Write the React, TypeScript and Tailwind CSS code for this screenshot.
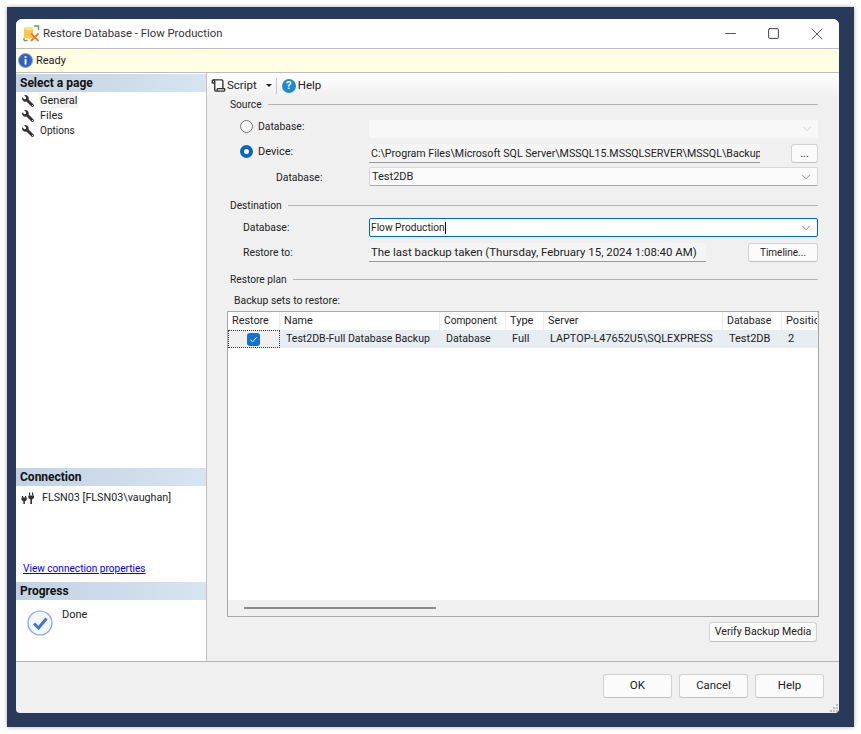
import React from "react";
import { ChevronDown, Minus, Square, X, Scroll } from "lucide-react";
import { FaWrench } from "react-icons/fa";

function SideHeader({ children }: { children: React.ReactNode }) {
  return (
    <div className="h-[18px] flex items-center pl-1 font-bold text-[12px] text-[#111] bg-gradient-to-r from-[#c3d2e2] to-[#d7e4f1]">
      {children}
    </div>
  );
}

function PageItem({ label, active, className }: { label: string; active?: boolean; className?: string }) {
  return (
    <div className="h-[15px] flex items-center pl-[6px]">
      <FaWrench className="text-[#333] w-[12px] h-[12px] -scale-x-100" />
      <span className={"ml-[5px] px-[1px] leading-[15px] " + (active ? "bg-[#f3f3f3] " : "") + (className || "")}>{label}</span>
    </div>
  );
}

function Section({ label, className }: { label: string; className?: string }) {
  return (
    <div className={"flex items-center h-[14px] " + (className || "")}>
      <span className="text-[10.2px] pt-[2px]">{label}</span>
      <div className="flex-1 h-[1px] bg-[#b4b4b4] ml-[6px]" />
    </div>
  );
}

function Btn({ children, className }: { children: React.ReactNode; className?: string }) {
  return (
    <div className={"flex items-center justify-center rounded-[3px] bg-[#fbfbfb] border border-[#d2d2d2] border-b-[#c2c2c2] " + (className || "")}>
      {children}
    </div>
  );
}

function Combo({ children, className }: { children?: React.ReactNode; className?: string }) {
  return (
    <div className={"flex items-center justify-between pl-[1px] pr-[4px] rounded-[2px] " + (className || "")}>
      <span className="leading-[15px] whitespace-nowrap">{children}</span>
      <ChevronDown className="w-[14px] h-[14px] text-[#555] shrink-0" strokeWidth={1.25} />
    </div>
  );
}

const cols = [
  { h: "Restore", w: "w-[52px]", c: "", hs: "text-[10.8px]", cs: "" },
  { h: "Name", w: "w-[160px]", c: "Test2DB-Full Database Backup", hs: "text-[10.8px]", cs: "text-[10.55px]" },
  { h: "Component", w: "w-[66px]", c: "Database", hs: "text-[10.2px]", cs: "text-[10.6px]" },
  { h: "Type", w: "w-[38px]", c: "Full", hs: "text-[11px]", cs: "text-[11px]" },
  { h: "Server", w: "w-[179px]", c: "LAPTOP-L47652U5\\SQLEXPRESS", hs: "text-[10.8px]", cs: "text-[10.85px]" },
  { h: "Database", w: "w-[59px]", c: "Test2DB", hs: "text-[10.5px]", cs: "text-[11px]" },
  { h: "Position", w: "w-[36px]", c: "2", hs: "text-[11px]", cs: "text-[11px]" },
];

function TitleIcon() {
  return (
    <svg width="17" height="17" viewBox="0 0 17 17">
      <path d="M1 3.5 C1 1.5 10 1.5 10 3.5 V12 C10 14 1 14 1 12 Z" fill="#f7c64a" />
      <ellipse cx="5.5" cy="3.5" rx="4.5" ry="1.8" fill="#fbe08c" />
      <path d="M11 1 H15.5 V5" fill="none" stroke="#5aa55a" strokeWidth="1.4" />
      <path d="M1 15.5 H4.5 M1 15.5 V13" fill="none" stroke="#5aa55a" strokeWidth="1.4" />
      <path d="M8 8.5 L15.5 16 M15.5 8.5 L8 16" stroke="#ea7a22" strokeWidth="1.8" />
    </svg>
  );
}

function InfoIcon() {
  return (
    <svg width="15" height="15" viewBox="0 0 15 15">
      <circle cx="7.5" cy="7.5" r="7" fill="#2f62c0" stroke="#8f9fb8" />
      <rect x="6.6" y="6.2" width="1.9" height="5.4" fill="#fff" />
      <rect x="6.6" y="3.2" width="1.9" height="1.9" fill="#fff" />
    </svg>
  );
}

function PlugIcon() {
  return (
    <svg width="14" height="14" viewBox="0 0 14 14" fill="#333">
      <rect x="1" y="5" width="1.2" height="2.5" />
      <rect x="4" y="5" width="1.2" height="2.5" />
      <path d="M0.5 6.5 H5.7 V9 L3.9 10.5 V13 H2.4 V10.5 L0.5 9 Z" />
      <rect x="8" y="1.5" width="1.2" height="3" />
      <rect x="11" y="1.5" width="1.2" height="3" />
      <path d="M7.3 4.5 H13 V7 L11 8.5 V13 H9.3 V8.5 L7.3 7 Z" />
    </svg>
  );
}

function DoneIcon() {
  return (
    <svg width="26" height="26" viewBox="0 0 26 26">
      <circle cx="13" cy="13" r="12" fill="#f2f5fb" stroke="#8aa4cc" strokeWidth="1.2" />
      <path d="M7 13.5 L11.5 18 L19.5 8.5" fill="none" stroke="#3f74d8" strokeWidth="3" />
    </svg>
  );
}

function Grip() {
  const dots = [[8, 0], [5, 3], [8, 3], [2, 6], [5, 6], [8, 6]];
  return (
    <svg width="10" height="8" viewBox="0 0 10 8" fill="#bdbdbd">
      {dots.map(([x, y], i) => <rect key={i} x={x} y={y} width="2" height="2" />)}
    </svg>
  );
}

export default function App() {
  return (
    <div className="w-[861px] h-[734px] bg-white p-[7px] text-[11px] text-[#222] font-['Roboto','Noto_Sans',sans-serif] leading-none overflow-hidden">
      <div className="w-[847px] h-[720px] bg-[#28395a] pt-[12px] pl-[9px] shadow-[0_0_4px_rgba(0,0,0,0.35)]">
        <div className="w-[823px] h-[694px] flex flex-col bg-[#f0f0f0] rounded-t-[6px] rounded-b-[4px] overflow-hidden">
          {/* Title bar */}
          <div className="h-[30px] shrink-0 bg-white flex items-center border-b border-[#bdbdbd]">
            <div className="ml-[7px]"><TitleIcon /></div>
            <span className="ml-[3px] text-[#333] text-[11.3px]">Restore Database - Flow Production</span>
            <div className="ml-auto flex items-center">
              <Minus className="w-[17px] h-[17px] mr-[28px] text-[#222]" strokeWidth={1.1} />
              <Square className="w-[13px] h-[13px] mr-[27px] text-[#222]" strokeWidth={1.6} />
              <X className="w-[20px] h-[20px] mr-[12px] text-[#222]" strokeWidth={0.9} />
            </div>
          </div>
          {/* Status */}
          <div className="h-[24px] shrink-0 bg-[#ffffe4] flex items-center pl-[2px] border-b border-[#bdbdbd]">
            <InfoIcon />
            <span className="ml-[3px]">Ready</span>
          </div>
          {/* Body */}
          <div className="h-[589px] shrink-0 flex border-b border-[#b4b4b4]">
            {/* Left pane */}
            <div className="w-[191px] shrink-0 bg-white flex flex-col pt-[1px] border-r border-[#c0c0c0]">
              <SideHeader>Select a page</SideHeader>
              <div className="pt-[1px]">
                <PageItem label="General" active />
                <PageItem label="Files" />
                <PageItem label="Options" className="text-[10px]" />
              </div>
              <div className="flex-1" />
              <SideHeader>Connection</SideHeader>
              <div className="h-[64px] flex items-start pl-[5px] pt-[5px]">
                <PlugIcon />
                <span className="ml-[7px] leading-[14px] text-[10.75px]">FLSN03 [FLSN03\vaughan]</span>
              </div>
              <div className="h-[32px] pl-[7px] pt-[12px]">
                <span className="text-[#0000ee] underline leading-[14px] text-[10.1px]">View connection properties</span>
              </div>
              <SideHeader>Progress</SideHeader>
              <div className="h-[61px] flex items-start pl-[11px] pt-[10px]">
                <DoneIcon />
                <span className="ml-[9px] -mt-[2px] leading-[14px]">Done</span>
              </div>
            </div>
            {/* Right pane */}
            <div className="w-[632px] flex flex-col">
              <div className="h-[24px] shrink-0 bg-gradient-to-b from-white to-[#f0f0f0] flex items-center pl-[4px] pt-[1px]">
                <Scroll className="w-[15px] h-[15px] text-[#333]" strokeWidth={2.2} />
                <span className="ml-[1px] text-[11.5px]">Script</span>
                <div className="ml-[9px] w-0 h-0 border-x-[3px] border-x-transparent border-t-[3px] border-t-[#222]" />
                <div className="ml-[4px] w-[1px] h-[16px] bg-[#c8c8c8]" />
                <div className="ml-[5px] w-[14px] h-[14px] rounded-full bg-[#1e8ad6] text-white font-bold text-[11px] flex items-center justify-center">?</div>
                <span className="ml-[2px] text-[11.5px]">Help</span>
              </div>
              <div className="pl-[23px] pr-[21px]">
                <Section label="Source" />
                <div className="flex items-center h-[18px] mt-[9px]">
                  <div className="w-[139px] shrink-0 flex items-center pl-[10px] -mt-[5px]">
                    <div className="w-[13px] h-[13px] rounded-full border border-[#767676] bg-[#f7f7f7]" />
                    <span className="ml-[5px] pt-[2px] text-[10.4px]">Database:</span>
                  </div>
                  <Combo className="w-[449px] h-[18px] bg-[#f8f8f8] [&_svg]:text-[#c4c4c4]" />
                </div>
                <div className="flex items-center h-[19px] mt-[6px]">
                  <div className="w-[139px] shrink-0 flex items-center pl-[10px] -mt-[5px]">
                    <div className="w-[13px] h-[13px] rounded-full border-[4px] border-[#0067c0] bg-white" />
                    <span className="ml-[5px]">Device:</span>
                  </div>
                  <div className="w-[391px] shrink-0 h-[19px] bg-[#f4f4f4] border-b border-[#9a9a9a] flex items-center pl-[2px] overflow-hidden whitespace-nowrap leading-[15px] text-[10.65px]">
                    C:\Program Files\Microsoft SQL Server\MSSQL15.MSSQLSERVER\MSSQL\Backup
                  </div>
                  <Btn className="ml-auto w-[27px] h-[19px]">...</Btn>
                </div>
                <div className="flex items-center h-[19px] mt-[4px]">
                  <span className="w-[139px] shrink-0 pl-[46px] pt-[3px] text-[10.4px]">Database:</span>
                  <Combo className="w-[449px] h-[19px] bg-[#fbfbfb] border border-[#d8d8d8] border-b-[#a8a8a8] pl-[2px]">Test2DB</Combo>
                </div>
                <Section label="Destination" className="mt-[12px]" />
                <div className="flex items-center h-[19px] mt-[6px]">
                  <span className="w-[139px] shrink-0 pl-[13px] pt-[1px] text-[10.4px]">Database:</span>
                  <Combo className="w-[449px] h-[19px] bg-white border border-[#0067c0] text-[10.2px]">
                    Flow Production<span className="inline-block w-[1px] h-[12px] bg-black align-middle" />
                  </Combo>
                </div>
                <div className="flex items-center h-[19px] mt-[6px]">
                  <span className="w-[139px] shrink-0 pl-[13px] pt-[2px] text-[10.4px]">Restore to:</span>
                  <div className="w-[337px] shrink-0 h-[19px] bg-[#f4f4f4] border-b border-[#9a9a9a] flex items-center pl-[2px] whitespace-nowrap overflow-hidden leading-[15px] text-[11.45px]">
                    The last backup taken (Thursday, February 15, 2024 1:08:40 AM)
                  </div>
                  <Btn className="ml-auto w-[70px] h-[19px] text-[10px]">Timeline...</Btn>
                </div>
                <Section label="Restore plan" className="mt-[10px]" />
                <div className="h-[14px] mt-[7px] ml-[4px] pt-[2px] flex items-center text-[10.4px]">Backup sets to restore:</div>
                {/* Table */}
                <div className="mt-[4px] -ml-[3px] w-[592px] h-[306px] border border-[#a8a8a8] bg-white flex flex-col overflow-hidden">
                  <div className="flex h-[18px] shrink-0">
                    {cols.map((c) => (
                      <div key={c.h} className={c.w + " " + c.hs + " shrink-0 pl-[4px] flex items-center border-r border-[#eeeeee] whitespace-nowrap overflow-hidden leading-[14px]"}>{c.h}</div>
                    ))}
                  </div>
                  <div className="flex h-[18px] shrink-0 bg-[#e8edf2]">
                    {cols.map((c, i) => (
                      <div key={c.h} className={c.w + " " + c.cs + " shrink-0 flex items-center whitespace-nowrap overflow-hidden leading-[14px] " + (i === 0 ? "justify-center pr-[2px] bg-[#f0f0f0] border border-dotted border-[#333]" : "pl-[6px]")}>
                        {i === 0 ? (
                          <div className="w-[13px] h-[13px] rounded-[3px] bg-[#1573c9] flex items-center justify-center">
                            <svg width="9" height="9" viewBox="0 0 9 9"><path d="M1.5 4.8 L3.6 6.8 L7.5 2.4" fill="none" stroke="#fff" strokeWidth="1" /></svg>
                          </div>
                        ) : c.c}
                      </div>
                    ))}
                  </div>
                  <div className="flex-1" />
                  <div className="h-[16px] shrink-0 bg-[#f0f0f0] flex items-center pl-[16px]">
                    <div className="w-[192px] h-[2px] bg-[#8a8a8a]" />
                  </div>
                </div>
                <div className="flex justify-end mt-[5px]">
                  <Btn className="w-[108px] h-[20px] mr-[1px] text-[10.6px]">Verify Backup Media</Btn>
                </div>
              </div>
            </div>
          </div>
          {/* Footer */}
          <div className="flex-1 relative flex justify-end items-start pt-[12px] pr-[15px] gap-[7px]">
            <Btn className="w-[69px] h-[24px] border-[#0067c0] text-[11.6px]">OK</Btn>
            <Btn className="w-[69px] h-[24px] text-[11.4px]">Cancel</Btn>
            <Btn className="w-[69px] h-[24px] text-[11.5px]">Help</Btn>
            <div className="absolute right-[1px] bottom-[1px]"><Grip /></div>
          </div>
        </div>
      </div>
    </div>
  );
}
